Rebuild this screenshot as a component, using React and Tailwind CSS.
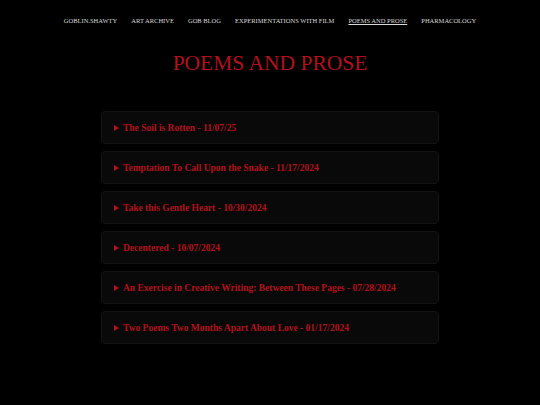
import React from "react";

const links = [
  { label: "GOBLIN.SHAWTY" },
  { label: "ART ARCHIVE" },
  { label: "GOB BLOG" },
  { label: "EXPERIMENTATIONS WITH FILM" },
  { label: "POEMS AND PROSE", active: true },
  { label: "PHARMACOLOGY" },
];

const poems = [
  "The Soil is Rotten - 11/07/25",
  "Temptation To Call Upon the Snake - 11/17/2024",
  "Take this Gentle Heart - 10/30/2024",
  "Decentered - 10/07/2024",
  "An Exercise in Creative Writing: Between These Pages - 07/28/2024",
  "Two Poems Two Months Apart About Love - 01/17/2024",
];

export default function App() {
  return (
    <div className="min-h-[405px] w-full bg-black font-['Liberation_Serif',serif]">
      {/* Nav */}
      <nav className="flex justify-center gap-[14px] pt-[17px] text-[6.5px] leading-[8px] text-[#d8d8d8]">
        {links.map((l) => (
          <a key={l.label} className={l.active ? "underline" : ""}>
            {l.label}
          </a>
        ))}
      </nav>

      <h1 className="mt-[25px] text-center text-[21.5px] leading-[26px] text-[#b3101c]">
        POEMS AND PROSE
      </h1>

      {/* Poem list */}
      <div className="mx-auto mt-[35px] flex w-[338px] flex-col gap-[7px]">
        {poems.map((p) => (
          <div
            key={p}
            className="flex h-[33px] items-center rounded-[4px] border border-[#131313] bg-[#090909] pl-[12px] text-[9.5px] font-bold text-[#b3101c]"
          >
            {/* disclosure marker */}
            <svg viewBox="0 0 5 6" className="mr-[4px] h-[6px] w-[5px] shrink-0" fill="currentColor">
              <path d="M0 0 L5 3 L0 6 Z" />
            </svg>
            <span className="leading-[12px]">{p}</span>
          </div>
        ))}
      </div>
    </div>
  );
}
